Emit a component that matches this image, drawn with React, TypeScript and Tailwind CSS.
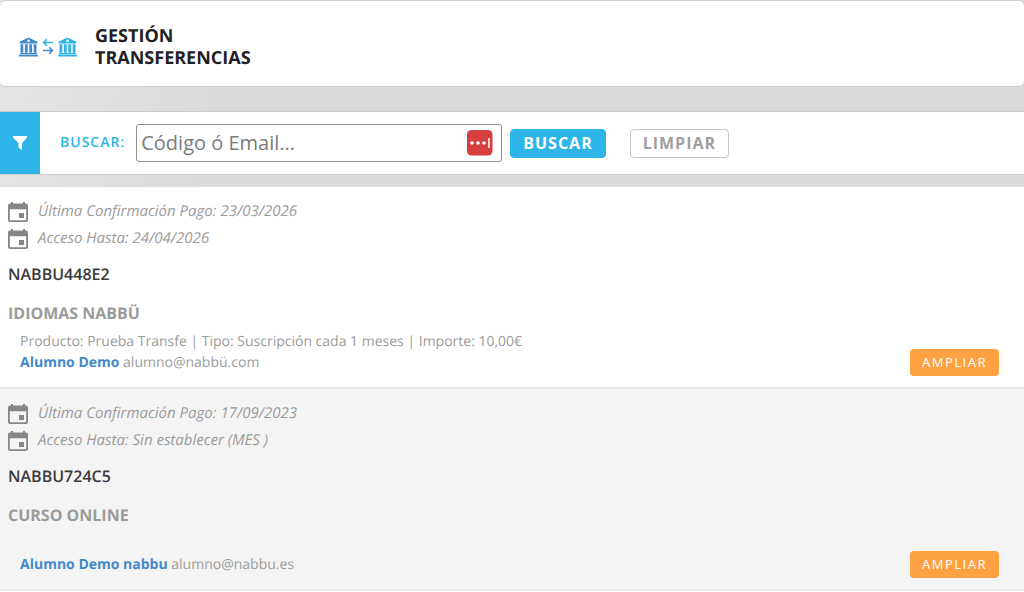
import { useState } from "react"

interface Transferencia {
    codigo: string
    pago: string
    acceso: string
    academia: string
    detalle: string
    alumno: string
    email: string
}

const transferencias: Transferencia[] = [
    {
        codigo: "NABBU448E2",
        pago: "23/03/2026",
        acceso: "24/04/2026",
        academia: "IDIOMAS NABBÜ",
        detalle: "Producto: Prueba Transfe | Tipo: Suscripción cada 1 meses | Importe: 10,00€",
        alumno: "Alumno Demo",
        email: "alumno@nabbü.com",
    },
    {
        codigo: "NABBU724C5",
        pago: "17/09/2023",
        acceso: "Sin establecer (MES )",
        academia: "CURSO ONLINE",
        detalle: "",
        alumno: "Alumno Demo nabbu",
        email: "alumno@nabbu.es",
    },
]

function BankIcon({ className }: { className: string }) {
    return (
        <svg viewBox="0 0 19 20" fill="currentColor" className={className} aria-hidden="true">
            <path fillRule="evenodd" d="M9.5 0.5 18.3 4.8V6.5H0.7V4.8zM9.5 2.5a1.3 1.3 0 1 0 0 2.6 1.3 1.3 0 0 0 0-2.6z" />
            <path d="M1.5 7.2h2.8v8.6H1.5zM5.9 7.2h2.8v8.6H5.9zM10.3 7.2h2.8v8.6h-2.8zM14.7 7.2h2.8v8.6h-2.8zM1 16h17v1.2H1zM0 17.8h19v1.7H0z" />
        </svg>
    )
}

function ArrowsIcon() {
    return (
        <svg viewBox="0 0 12 18" fill="none" strokeWidth="1.6" className="w-3 h-[18px] mx-1" aria-hidden="true">
            <path d="M11 4.5H1.8M4.8 1.3 1.6 4.5l3.2 3.2" stroke="#2eb5e8" />
            <path d="M1 12.5h9.2M7.2 9.3l3.2 3.2-3.2 3.2" stroke="#4389c8" />
        </svg>
    )
}

function CalendarIcon() {
    return (
        <svg viewBox="0 0 20 20" fill="#868686" className="w-5 h-5 shrink-0" aria-hidden="true">
            <path fillRule="evenodd" d="M3 0h2v1.5h10V0h2v1.5h1a2 2 0 0 1 2 2V18a2 2 0 0 1-2 2H2a2 2 0 0 1-2-2V3.5a2 2 0 0 1 2-2h1zM1.8 7.2V17.2a1 1 0 0 0 1 1H17.2a1 1 0 0 0 1-1V7.2z" />
            <path d="M11 11h5v5h-5z" />
        </svg>
    )
}

function Fila({ item }: { item: Transferencia }) {
    return (
        <li className="flex items-end justify-between pt-[11px] pr-[25px] pl-2 border-b-2 border-[#ebebeb] bg-white even:bg-[#f4f4f4]">
            <div className="pb-[14px] text-[#9b9b9b]">
                <p className="flex items-center gap-[10px] h-[27px] text-[15px] italic"><CalendarIcon />Última Confirmación Pago: {item.pago}</p>
                <p className="flex items-center gap-[10px] h-[27px] text-[15px] italic"><CalendarIcon />Acceso Hasta: {item.acceso}</p>
                <h2 className="mt-[10px] text-base leading-6 font-semibold text-[#3b3b3b]">{item.codigo}</h2>
                <h3 className="mt-[15px] text-base leading-6 font-bold">{item.academia}</h3>
                <div className="mt-[6px] pl-3 text-sm leading-[21px]">
                    <p className="min-h-[21px]">{item.detalle}</p>
                    <p><a href="#" className="font-bold text-[#4389c8]">{item.alumno}</a> {item.email}</p>
                </div>
            </div>
            <button className="h-[27px] mb-[11px] px-3 rounded-[4px] bg-[#fea142] text-[13px] tracking-[1.5px] text-white">AMPLIAR</button>
        </li>
    )
}

export default function App() {
    const [busqueda, setBusqueda] = useState("")

    return (
        <div className="flex flex-col min-h-screen bg-[linear-gradient(100deg,#e5e5e5_0px,#dadada_240px,#dadada_100%)] font-['Open_Sans',sans-serif] [text-rendering:geometricPrecision]">
            <header className="flex items-center h-[87px] pt-[6px] pl-[19px] border border-x-0 border-[#d0d0d0] rounded-md bg-white">
                <BankIcon className="w-[19px] h-5 text-[#4389c8]" />
                <ArrowsIcon />
                <BankIcon className="w-[19px] h-5 text-[#2eb5e8]" />
                <h1 className="ml-[18px] text-lg leading-[22px] font-bold text-[#1f2124]">GESTIÓN<br />TRANSFERENCIAS</h1>
            </header>

            <form className="flex items-center h-16 mt-6 border-y border-[#cccccc] bg-white" onSubmit={(e) => e.preventDefault()}>
                <div className="flex items-center justify-center w-10 h-full bg-[#2eb5e8]">
                    <svg viewBox="0 0 16 16" fill="white" className="w-4 h-4" aria-hidden="true">
                        <path d="M1 1h14v1.5L10 8.2V15l-3.5-2.2V8.2L1 2.5z" />
                    </svg>
                </div>
                <label htmlFor="busqueda" className="ml-5 text-sm font-semibold tracking-[1px] text-[#2eb5e8]">BUSCAR:</label>
                <div className="relative ml-[11px]">
                    <input
                        id="busqueda"
                        type="text"
                        value={busqueda}
                        onChange={(e) => setBusqueda(e.target.value)}
                        placeholder="Código ó Email..."
                        className="block w-[366px] h-[38px] pl-1 pr-10 pb-[2px] border border-[#8f8f8f] rounded-[3px] text-xl text-[#555] placeholder:text-[#7b7b7b]"
                    />
                    <svg viewBox="0 0 26 26" className="absolute right-[9px] top-[6px] w-[26px] h-[26px]" aria-hidden="true">
                        <rect width="25.5" height="25.5" rx="4.5" fill="#d63f3f" />
                        <circle cx="5" cy="13" r="1.8" fill="white" />
                        <circle cx="11" cy="13" r="1.8" fill="white" />
                        <circle cx="17" cy="13" r="1.8" fill="white" />
                        <path d="M22 8v10" stroke="white" strokeWidth="1.5" />
                    </svg>
                </div>
                <button type="submit" className="h-[29px] ml-2 px-3 border border-[#2eb5e8] rounded-[4px] bg-[#2eb5e8] text-base leading-none font-bold tracking-[1px] text-white">BUSCAR</button>
                <button type="button" onClick={() => setBusqueda("")} className="h-[29px] ml-6 px-3 border border-[#c6c6c6] rounded-[4px] text-base leading-none font-bold tracking-[1px] text-[#9f9f9f]">LIMPIAR</button>
            </form>

            <ul className="grow mt-3 bg-white">
                {transferencias.map((item) => <Fila key={item.codigo} item={item} />)}
            </ul>
        </div>
    )
}
